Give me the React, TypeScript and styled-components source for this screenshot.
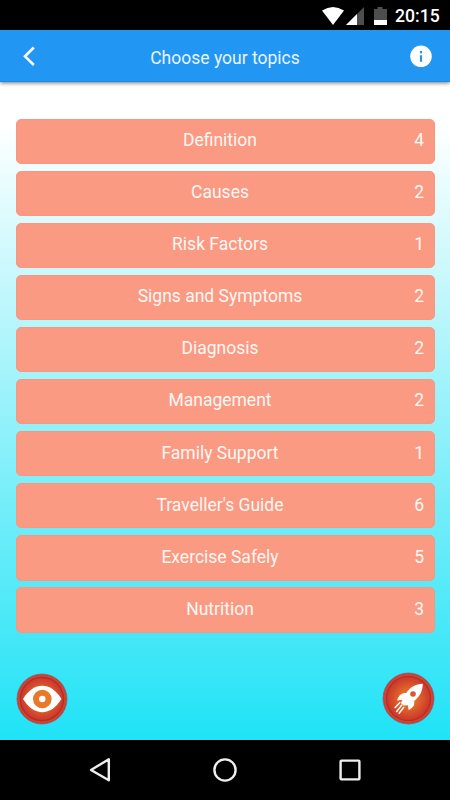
import React from "react";
import styled, { createGlobalStyle } from "styled-components";

const GlobalStyle = createGlobalStyle`
  * { box-sizing: border-box; }
  body { margin: 0; background: #000; font-family: Roboto, sans-serif; }
`;

const Screen = styled.div`
  width: 450px;
  height: 800px;
  display: flex;
  flex-direction: column;
  overflow: hidden;
`;

const StatusBar = styled.div`
  flex: none;
  height: 30px;
  padding: 1px 10px 0 0;
  background: #000;
  display: flex;
  align-items: center;
  justify-content: flex-end;
`;

const StatusIcons = styled.svg`
  display: block;
  width: 68px;
  height: 20px;
  margin-right: 6px;
`;

const Clock = styled.span`
  width: 45px;
  color: #fff;
  font-size: 17.6px;
  font-weight: 500;
  line-height: 30px;
  white-space: nowrap;
`;

const AppBar = styled.header`
  flex: none;
  height: 52px;
  padding: 0 17px 0 16px;
  background: #2196f3;
  border-bottom: 1px solid #168bea;
  box-shadow: 0 1px 4px rgba(0, 0, 0, 0.55);
  z-index: 1;
  display: grid;
  grid-template-columns: 26px 1fr 24px;
  align-items: center;
`;

const Title = styled.h1`
  margin: 0 1px 0 0;
  padding-top: 4px;
  color: #e9f4fe;
  font-size: 17.5px;
  font-weight: 400;
  line-height: 24px;
  text-align: center;
`;

const IconButton = styled.button`
  width: 26px;
  height: 26px;
  padding: 0;
  border: 0;
  background: none;
  display: block;
  svg { display: block; }
`;

const Content = styled.main`
  flex: 1;
  min-height: 0;
  padding: 36.5px 15px 15px 16px;
  background: linear-gradient(#fff 0, #fff 42px, #22e3f6 650px);
  display: flex;
  flex-direction: column;
  justify-content: space-between;
`;

const TopicList = styled.div`
  display: flex;
  flex-direction: column;
  gap: 6.8px;
`;

const Topic = styled.div`
  height: 45.3px;
  padding: 0 11px 2.3px 0;
  border-radius: 5px;
  background: #fa9a82;
  border: 1px solid #fa967d;
  color: #fff7f4;
  font-size: 17.5px;
  line-height: 24px;
  display: grid;
  grid-template-columns: 1fr 20px;
  align-items: center;
`;

const TopicName = styled.span`
  padding-left: 20px;
  text-align: center;
`;

const TopicCount = styled.span`
  text-align: right;
  margin-right: -1px;
`;

const Actions = styled.div`
  display: flex;
  justify-content: space-between;
  align-items: flex-end;
`;

const RoundButton = styled.button<{ $size: number }>`
  width: ${(p) => p.$size}px;
  height: ${(p) => p.$size}px;
  padding: 0;
  border: 0;
  background: none;
  svg { display: block; width: 100%; height: 100%; }
`;

const NavBar = styled.nav`
  flex: none;
  height: 60px;
  padding: 0 87px;
  background: #000;
  display: flex;
  justify-content: space-between;
  align-items: center;
  svg { display: block; }
`;

const topics: [string, number][] = [
  ["Definition", 4],
  ["Causes", 2],
  ["Risk Factors", 1],
  ["Signs and Symptoms", 2],
  ["Diagnosis", 2],
  ["Management", 2],
  ["Family Support", 1],
  ["Traveller's Guide", 6],
  ["Exercise Safely", 5],
  ["Nutrition", 3],
];

function Disc({ id }: { id: string }) {
  return (
    <>
      <defs>
        <radialGradient id={id}>
          <stop offset="0" stopColor="#ef8420" />
          <stop offset="0.5" stopColor="#df6029" />
          <stop offset="1" stopColor="#c9372c" />
        </radialGradient>
      </defs>
      <circle cx="26.5" cy="26.5" r="25.5" fill="#c63c2d" stroke="#8d6080" strokeWidth="0.8" />
      <circle cx="26.5" cy="26.5" r="23.5" fill="none" stroke="#cf452d" strokeWidth="1.8" />
      <circle cx="26.5" cy="26.5" r="22" fill={`url(#${id})`} stroke="#b52c2b" strokeWidth="1.2" />
    </>
  );
}

export default function App() {
  return (
    <>
      <GlobalStyle />
      <Screen>
        <StatusBar>
          <StatusIcons viewBox="0 0 68 20">
            <path d="M1 4.5Q12 -2.5 23 4.5L12 19Z" fill="#fff" />
            <path d="M43 1V19H25Z" fill="#4d4d4d" />
            <path d="M36 8V19H25Z" fill="#fff" />
            <path d="M56.5 1H61.5V3H66V14H53V3H56.5Z" fill="#4d4d4d" />
            <path d="M53 14H66V19H53Z" fill="#fff" />
          </StatusIcons>
          <Clock>20:15</Clock>
        </StatusBar>
        <AppBar>
          <IconButton aria-label="Back">
            <svg width="26" height="26" viewBox="0 0 26 26">
              <path d="M17.8 4.5L9 13.3L17.8 22" fill="none" stroke="#fff" strokeWidth="2.6" />
            </svg>
          </IconButton>
          <Title>Choose your topics</Title>
          <IconButton aria-label="Information">
            <svg width="26" height="26" viewBox="0 0 26 26">
              <circle cx="12" cy="13.3" r="10.8" fill="#fff" />
              <path d="M10.9 8.1H13.1V10.2H10.9ZM10.9 12.2H13.1V18.7H10.9Z" fill="#2196f3" />
            </svg>
          </IconButton>
        </AppBar>
        <Content>
          <TopicList>
            {topics.map(([name, count]) => (
              <Topic key={name}>
                <TopicName>{name}</TopicName>
                <TopicCount>{count}</TopicCount>
              </Topic>
            ))}
          </TopicList>
          <Actions>
            <RoundButton $size={52} aria-label="View">
              <svg viewBox="0 0 53 53">
                <Disc id="eye-disc" />
                <path d="M7.2 26.5C18 8.6 35.5 8.6 46.3 26.5C35.5 44.4 18 44.4 7.2 26.5Z" fill="#fff" />
                <circle cx="26.8" cy="26.5" r="9.5" fill="#e9792a" />
                <circle cx="26.8" cy="26.5" r="3.3" fill="#fff" />
              </svg>
            </RoundButton>
            <RoundButton $size={53} aria-label="Start">
              <svg viewBox="0 0 53 53">
                <Disc id="rocket-disc" />
                <path
                  d="M40.8 11.8C33.5 11.9 28.4 15.2 24.2 21.1C19.9 20.8 17 23 14.9 28.6L20.5 27.8L18.9 30.9L21.5 33.6L26 33.2L26.5 38C31.2 35.9 32.8 33.3 32.2 29C37.5 24.7 40.7 19.6 40.8 11.8Z"
                  fill="#fff"
                />
                <circle cx="31" cy="22" r="2.8" fill="#d9572b" />
                <path d="M18.2 30.3L12.7 36M20 32.7L14.3 40M22 35L16.7 41.8" fill="none" stroke="#fff" strokeWidth="1.4" />
              </svg>
            </RoundButton>
          </Actions>
        </Content>
        <NavBar>
          <svg width="26" height="26" viewBox="0 0 26 26">
            <path d="M4 13L21.8 2.3V23.3Z" fill="none" stroke="#eee" strokeWidth="2.4" strokeLinejoin="round" />
          </svg>
          <svg width="26" height="26" viewBox="0 0 26 26">
            <circle cx="13" cy="13" r="10.6" fill="none" stroke="#eee" strokeWidth="2.4" />
          </svg>
          <svg width="26" height="26" viewBox="0 0 26 26">
            <rect x="3.6" y="3.6" width="18.8" height="18.8" rx="0.8" fill="none" stroke="#eee" strokeWidth="2.4" />
          </svg>
        </NavBar>
      </Screen>
    </>
  );
}
